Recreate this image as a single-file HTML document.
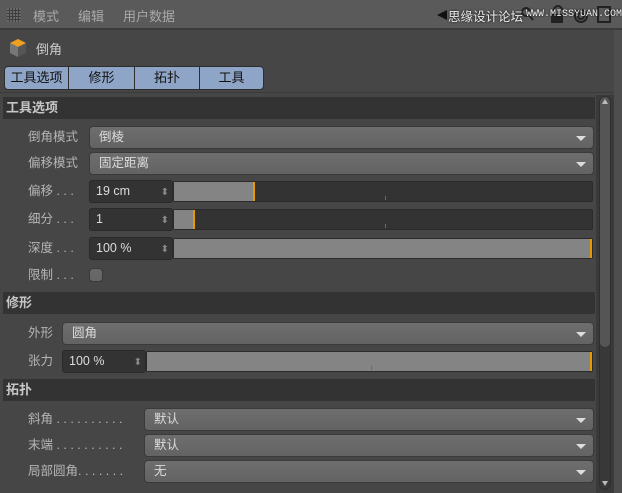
<!DOCTYPE html><html><head><meta charset="utf-8"><style>
*{margin:0;padding:0;box-sizing:border-box}
body{width:622px;height:493px;overflow:hidden;background:#464646;font-family:"Liberation Sans","Noto Sans CJK SC",sans-serif;font-size:12px;color:#c8c8c8;position:relative}
.a{position:absolute}
.menu{left:0;top:0;width:622px;height:30px;background:#5a5a5a;border-bottom:2px solid #3c3c3c}
.menu span{position:absolute;top:6px;font-size:13px;color:#a9a9a9}
.tab{position:absolute;top:66px;height:24px;background:#8ea5c7;border:1px solid #2e2e2e;color:#111;font-size:13px;text-align:center;line-height:21px}
.sec{left:3px;width:592px;height:22px;background:#333;color:#c6c6c6;font-size:13px;line-height:21px;padding-left:3px;font-weight:bold}
.lbl{font-size:12.5px;color:#b5b5b5;line-height:16px}
.dd{height:23px;border-radius:4px;background:linear-gradient(#6e6e6e,#636363);border:1px solid #3a3a3a;color:#ddd;font-size:12.5px;line-height:21px;padding-left:9px}
.dd:after{content:"";position:absolute;right:7px;top:9px;border-left:5px solid transparent;border-right:5px solid transparent;border-top:5px solid #ddd}
.in{height:23px;background:#333;border:1px solid #2a2a2a;border-radius:3px;color:#ddd;font-size:12.5px;line-height:21px;padding-left:6px}
.in:after{content:"⬍";position:absolute;right:3px;top:1px;color:#888;font-size:10px}
.tr{height:21px;background:#333;border:1px solid #2b2b2b;border-radius:2px}
.fill{position:absolute;left:0;top:0;bottom:0;background:#848484}
.or{position:absolute;top:0;bottom:0;width:2px;background:#e69a00}
.tick{position:absolute;top:14px;width:1px;height:4px;background:#8a6a20}
</style></head><body>
<div class="a menu">
<svg class="a" style="left:7px;top:8px" width="14" height="14"><rect x="0" y="0" width="14" height="14" fill="#6a6a6a"/><g stroke="#3e3e3e" stroke-width="1"><path d="M0 2.5H14M0 5.5H14M0 8.5H14M0 11.5H14M2.5 0V14M5.5 0V14M8.5 0V14M11.5 0V14"/></g></svg>
<span style="left:33px">模式</span><span style="left:78px">编辑</span><span style="left:123px">用户数据</span>
<svg class="a" style="left:520px;top:4px" width="100" height="22"><g fill="none" stroke="#222" stroke-width="2"><circle cx="6" cy="8" r="4"/><path d="M9 11L13 16"/><path d="M34 10V6a4 4 0 0 1 8 0"/><circle cx="61" cy="12" r="6"/><circle cx="61" cy="12" r="3"/><rect x="78" y="3" width="12" height="15"/></g><rect x="31" y="10" width="12" height="9" fill="#222"/></svg>
<div class="a" style="left:437px;top:10px;border-top:5px solid transparent;border-bottom:5px solid transparent;border-right:10px solid #111"></div>
<span style="left:448px;top:6px;color:#eee;font-size:12.5px;text-shadow:0 0 2px #000">思缘设计论坛</span>
<span style="left:526px;top:9px;color:#eee;font-size:10px;font-family:'Liberation Mono',monospace;text-shadow:0 0 2px #000">WWW.MISSYUAN.COM</span>
</div>
<svg class="a" style="left:8px;top:37px" width="20" height="22"><path d="M10 2L18 6V16L10 20L2 16V6Z" fill="#555"/><path d="M10 2L18 6L10 10L2 6Z" fill="#f0a020"/><path d="M2 6L10 10V20L2 16Z" fill="#777"/></svg>
<div class="a" style="left:36px;top:39px;font-size:13px;color:#ccc">倒角</div>
<div class="tab" style="left:4px;width:65px;border-radius:4px 0 0 4px">工具选项</div>
<div class="tab" style="left:68px;width:67px">修形</div>
<div class="tab" style="left:134px;width:66px">拓扑</div>
<div class="tab" style="left:199px;width:65px;border-radius:0 4px 4px 0">工具</div>
<div class="a" style="left:0;top:92px;width:622px;height:1px;background:#3a3a3a"></div>
<div class="a" style="left:596px;top:95px;width:18px;height:398px;background:#3a3a3a"></div>
<div class="a" style="left:599px;top:96px;width:12px;height:394px;background:#383838;border:1px solid #2e2e2e;border-radius:6px"></div>
<div class="a" style="left:600px;top:97px;width:10px;height:250px;background:#555;border-radius:5px"></div>
<div class="a" style="left:602px;top:99px;border-left:3px solid transparent;border-right:3px solid transparent;border-bottom:5px solid #bbb"></div>
<div class="a" style="left:602px;top:481px;border-left:3px solid transparent;border-right:3px solid transparent;border-top:5px solid #bbb"></div>
<div class="a" style="left:614px;top:30px;width:8px;height:463px;background:#4e4e4e"></div>

<div class="a sec" style="top:97px">工具选项</div>
<div class="a lbl" style="left:28px;top:129px">倒角模式</div><div class="a dd" style="left:89px;top:126px;width:505px">倒棱</div>
<div class="a lbl" style="left:28px;top:155px">偏移模式</div><div class="a dd" style="left:89px;top:152px;width:505px">固定距离</div>
<div class="a lbl" style="left:28px;top:183px">偏移 . . .</div><div class="a in" style="left:89px;top:180px;width:84px">19 cm</div>
<div class="a tr" style="left:173px;top:181px;width:420px"><div class="fill" style="width:80px"></div><div class="or" style="left:79px"></div><div class="tick" style="left:211px"></div></div>
<div class="a lbl" style="left:28px;top:211px">细分 . . .</div><div class="a in" style="left:89px;top:208px;width:84px">1</div>
<div class="a tr" style="left:173px;top:209px;width:420px"><div class="fill" style="width:20px"></div><div class="or" style="left:19px"></div><div class="tick" style="left:211px"></div></div>
<div class="a lbl" style="left:28px;top:240px">深度 . . .</div><div class="a in" style="left:89px;top:237px;width:84px">100 %</div>
<div class="a tr" style="left:173px;top:238px;width:420px"><div class="fill" style="width:418px"></div><div class="or" style="left:416px"></div></div>
<div class="a lbl" style="left:28px;top:267px">限制 . . .</div>
<div class="a" style="left:89px;top:268px;width:14px;height:14px;border-radius:4px;background:#676767;border:1px solid #3a3a3a"></div>

<div class="a sec" style="top:292px">修形</div>
<div class="a lbl" style="left:28px;top:325px">外形</div><div class="a dd" style="left:62px;top:322px;width:532px">圆角</div>
<div class="a lbl" style="left:28px;top:353px">张力</div><div class="a in" style="left:62px;top:350px;width:84px">100 %</div>
<div class="a tr" style="left:146px;top:351px;width:447px"><div class="fill" style="width:445px"></div><div class="or" style="left:443px"></div><div class="tick" style="left:224px"></div></div>

<div class="a sec" style="top:379px">拓扑</div>
<div class="a lbl" style="left:28px;top:411px">斜角 . . . . . . . . . .</div><div class="a dd" style="left:144px;top:408px;width:450px">默认</div>
<div class="a lbl" style="left:28px;top:437px">末端 . . . . . . . . . .</div><div class="a dd" style="left:144px;top:434px;width:450px">默认</div>
<div class="a lbl" style="left:28px;top:463px">局部圆角. . . . . . .</div><div class="a dd" style="left:144px;top:460px;width:450px">无</div>
</body></html>
